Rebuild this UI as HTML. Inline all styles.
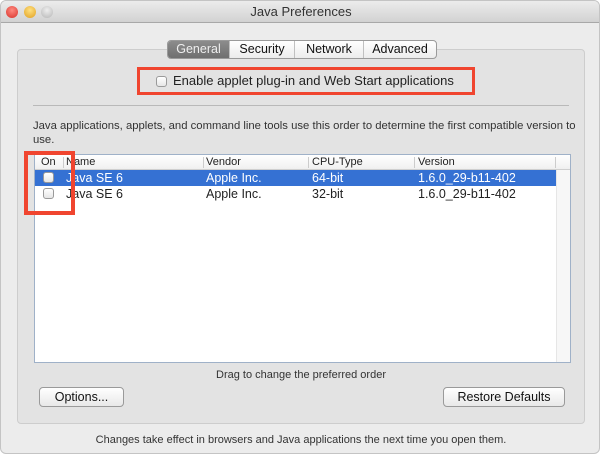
<!DOCTYPE html>
<html><head><style>
*{margin:0;padding:0;box-sizing:border-box}
body{width:600px;height:454px;background:#fff;font-family:"Liberation Sans",sans-serif;position:relative;overflow:hidden;color:#222}
.win{position:absolute;left:0;top:0;width:600px;height:454px;background:#ececec;border-radius:6px;overflow:hidden;border:1px solid #c4c4c4}
.title{position:absolute;left:0;top:0;width:600px;height:22px;background:linear-gradient(#ececec,#d2d2d2);border-bottom:1px solid #a8a8a8;text-align:center;font-size:13px;line-height:22px;color:#333}
.tl{position:absolute;top:5px;width:12px;height:12px;border-radius:50%}
.abs{position:absolute}
.group{position:absolute;left:16px;top:48px;width:568px;height:375px;background:#e3e3e3;border:1px solid #cdcdcd;border-radius:4px}
.tabs{position:absolute;left:166px;top:39px;height:19px;display:flex;border:1px solid #9a9a9a;border-radius:4px;overflow:hidden;background:linear-gradient(#fff,#ececec);font-size:12.5px;line-height:17px}
.tabs div{text-align:center;border-left:1px solid #c0c0c0;color:#111}
.tabs div.sel{background:linear-gradient(#8c8c8c,#6f6f6f);color:#eee;border-left:none}
.red{position:absolute;border:3px solid #f0452f}
.cb{position:absolute;width:11px;height:11px;border:1px solid #9a9a9a;border-radius:3px;background:linear-gradient(#fff,#e6e6e6)}
.t11{font-size:11px}
.table{position:absolute;left:33px;top:153px;width:537px;height:209px;background:#fff;border:1px solid #9fb1c8}
.hdr{position:absolute;left:0;top:0;width:535px;height:15px;border-bottom:1px solid #cfcfcf;background:linear-gradient(#fff,#f0f0f0);font-size:11px;line-height:15px}
.row{position:absolute;left:0;width:521px;height:16px;font-size:12.5px;line-height:16px}
.btn{position:absolute;height:20px;border:1px solid #9a9a9a;border-radius:4px;background:linear-gradient(#fff,#e8e8e8);font-size:12.5px;line-height:18px;text-align:center;color:#111}
</style></head><body>
<div class="win">
<div class="title">Java Preferences
<div class="tl" style="left:5px;background:radial-gradient(circle at 50% 35%,#ff8a80,#d8322a)"></div>
<div class="tl" style="left:23px;background:radial-gradient(circle at 50% 35%,#ffe080,#e0a020)"></div>
<div class="tl" style="left:40px;background:radial-gradient(circle at 50% 35%,#eee,#b5b5b5)"></div>
</div>
<div class="group"></div>
<div class="tabs">
<div class="sel" style="width:61px">General</div>
<div style="width:65px">Security</div>
<div style="width:69px">Network</div>
<div style="width:73px">Advanced</div>
</div>
<div class="red" style="left:136px;top:66px;width:338px;height:28px"></div>
<div class="cb" style="left:155px;top:75px"></div>
<div class="abs" style="left:172px;top:72px;font-size:13px">Enable applet plug-in and Web Start applications</div>
<div class="abs" style="left:32px;top:104px;width:536px;height:1px;background:#b9b9b9"></div>
<div class="abs" style="left:32px;top:118px;width:545px;line-height:14px;color:#333;font-size:11.3px">Java applications, applets, and command line tools use this order to determine the first compatible version to use.</div>
<div class="table">
<div class="hdr">
<span class="abs" style="left:6px">On</span>
<span class="abs" style="left:28px;top:2px;width:1px;height:11px;background:#ccc"></span>
<span class="abs" style="left:31px">Name</span>
<span class="abs" style="left:168px;top:2px;width:1px;height:11px;background:#ccc"></span>
<span class="abs" style="left:171px">Vendor</span>
<span class="abs" style="left:273px;top:2px;width:1px;height:11px;background:#ccc"></span>
<span class="abs" style="left:277px">CPU-Type</span>
<span class="abs" style="left:379px;top:2px;width:1px;height:11px;background:#ccc"></span>
<span class="abs" style="left:383px">Version</span>
<span class="abs" style="left:520px;top:2px;width:1px;height:11px;background:#ccc"></span>
</div>
<div class="row" style="top:15px;background:#3571d3;color:#fff">
<span class="abs" style="left:31px">Java SE 6</span><span class="abs" style="left:171px">Apple Inc.</span><span class="abs" style="left:277px">64-bit</span><span class="abs" style="left:383px">1.6.0_29-b11-402</span>
</div>
<div class="row" style="top:31px">
<span class="abs" style="left:31px">Java SE 6</span><span class="abs" style="left:171px">Apple Inc.</span><span class="abs" style="left:277px">32-bit</span><span class="abs" style="left:383px">1.6.0_29-b11-402</span>
</div>
<div class="abs" style="left:521px;top:15px;width:14px;height:192px;background:#f7f7f7;border-left:1px solid #e6e6e6"></div>
</div>
<div class="cb" style="left:42px;top:171px"></div>
<div class="cb" style="left:42px;top:187px"></div>
<div class="red" style="left:23px;top:150px;width:51px;height:64px;border-width:4px"></div>
<div class="abs t11" style="left:0;width:600px;top:368px;text-align:center;color:#333">Drag to change the preferred order</div>
<div class="btn" style="left:38px;top:386px;width:85px">Options...</div>
<div class="btn" style="left:442px;top:386px;width:122px">Restore Defaults</div>
<div class="abs t11" style="left:0;width:600px;top:433px;text-align:center;color:#333">Changes take effect in browsers and Java applications the next time you open them.</div>
</div>
</body></html>
